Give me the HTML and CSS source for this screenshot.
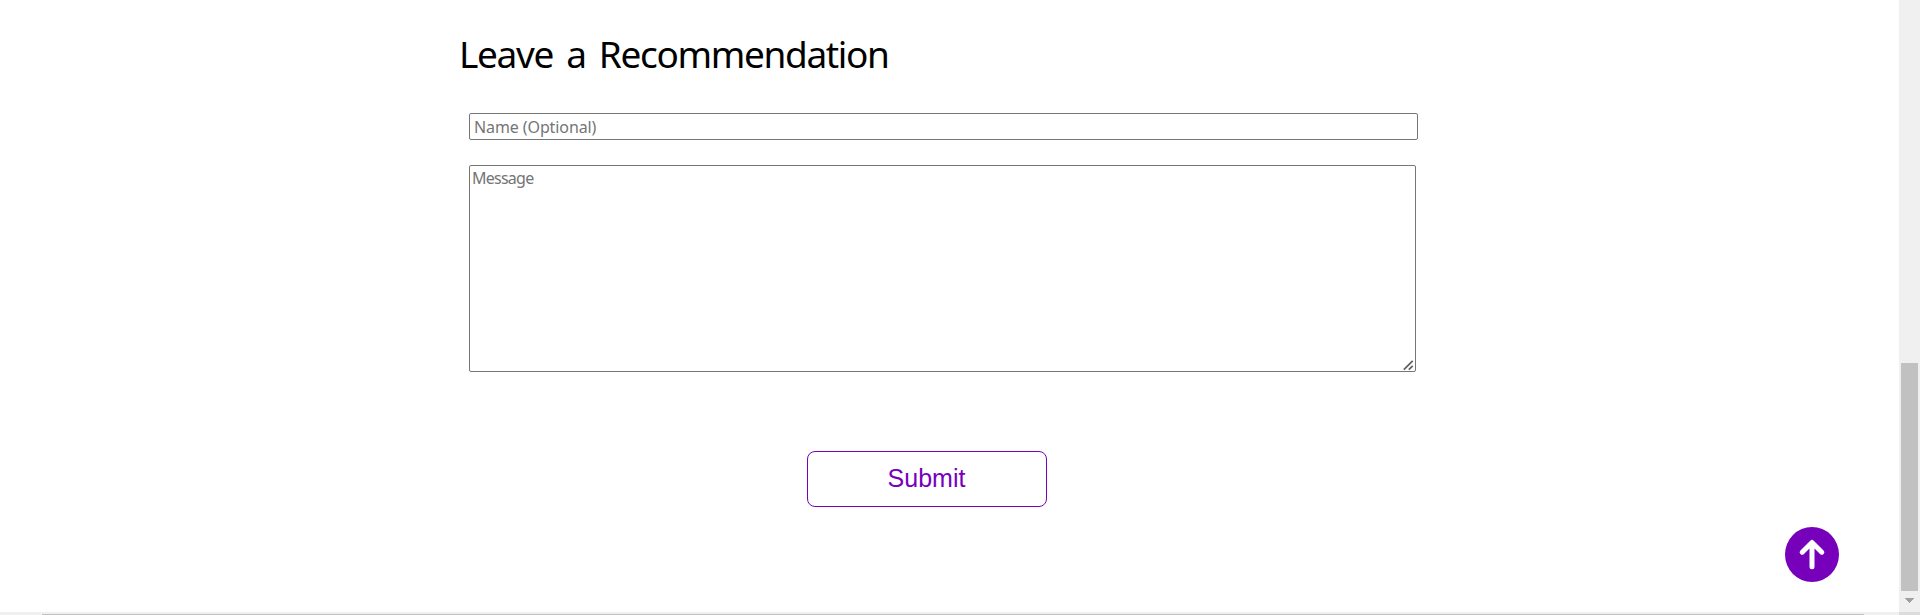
FILE: index.html
```html
<!DOCTYPE html>
<html lang="en">
<head>
<meta charset="utf-8">
<title>Leave a Recommendation</title>
<link rel="stylesheet" href="styles.css">
</head>
<body>
<div class="window">
  <main class="page">
    <form class="form">
      <h1 class="title">Leave a Recommendation</h1>
      <input class="field name" type="text" placeholder="Name (Optional)">
      <div class="message-wrap">
        <textarea class="field message" placeholder="Message"></textarea>
        <svg class="grip" width="11" height="11" viewBox="0 0 11 11"><path d="M.8 9.7 9.7 .8M5.8 9.7 9.7 5.8" stroke="#606060" stroke-width="1.7" fill="none"/></svg>
      </div>
      <button class="submit" type="button">Submit</button>
    </form>
    <a class="to-top" href="#" aria-label="Back to top">
      <svg width="54" height="55" viewBox="0 0 54 55"><ellipse cx="27" cy="27.5" rx="27" ry="27.5" fill="#7700bb"/><path d="M27 39.8V16M17.2 25.2 27 15.4 36.8 25.2" fill="none" stroke="#fff" stroke-width="5" stroke-linecap="round" stroke-linejoin="round"/></svg>
    </a>
  </main>
  <div class="vbar">
    <div class="vthumb"></div>
    <svg class="arrow" width="9" height="5" viewBox="0 0 9 5" shape-rendering="crispEdges"><path d="M0 0h9v1H8v1H7v1H6v1H5v1H4V4H3V3H2V2H1V1H0z" fill="#a0a0a0"/></svg>
  </div>
  <div class="hbar"><div class="hthumb"></div></div>
  <div class="corner"></div>
</div>
</body>
</html>
```
FILE: styles.css
```css
body {
  margin: 0;
  background: #fff;
  overflow: hidden;
}
.window {
  display: grid;
  grid-template-columns: 1fr 21px;
  grid-template-rows: 1fr 3px;
  height: 615px;
}
.page {
  position: relative;
  overflow: hidden;
}
.form {
  display: flex;
  flex-direction: column;
  align-items: flex-start;
  padding: 26px 0 0 469px;
}
.title {
  margin: 0 0 32px -10px;
  height: 55px;
  font: 400 37px/55px "Trebuchet MS", "Noto Sans", sans-serif;
  letter-spacing: -1.35px;
  word-spacing: 5px;
  white-space: nowrap;
  color: #000;
}
.field {
  display: block;
  box-sizing: border-box;
  margin: 0;
  border: 1px solid #767676;
  border-radius: 2px;
  outline: none;
  background: #fff;
  font: 16px/22px "Trebuchet MS", "Noto Sans", sans-serif;
}
.field::placeholder {
  color: #757575;
  opacity: 1;
}
.name {
  width: 949px;
  height: 27px;
  padding: 1px 3px 1px 4px;
  letter-spacing: -0.1px;
}
.message-wrap {
  position: relative;
  margin-top: 25px;
}
.message {
  width: 947px;
  height: 207px;
  padding: 1px 2px;
  letter-spacing: -0.75px;
  resize: none;
}
.grip {
  position: absolute;
  right: 2px;
  bottom: 1px;
}
.submit {
  box-sizing: border-box;
  width: 240px;
  height: 56px;
  margin: 79px 0 0 338px;
  padding: 0 1px 2px 0;
  border: 1px solid #7700bb;
  border-radius: 8px;
  background: #fff;
  color: #7700bb;
  font: 25px/52px "Liberation Sans", Arial, sans-serif;
}
.to-top {
  position: absolute;
  left: 1785px;
  top: 527px;
  height: 55px;
}
.to-top svg {
  display: block;
}
.vbar {
  display: flex;
  flex-direction: column;
  align-items: center;
  padding-top: 363px;
  background: #f0f0f0;
}
.vthumb {
  width: 17px;
  height: 228px;
  background: #c1c1c1;
}
.arrow {
  margin-top: 7px;
}
.hbar {
  padding: 2px 35px 0 42px;
  background: #f0f0f0;
}
.hthumb {
  height: 1px;
  background: #c1c1c1;
}
.corner {
  background: #dcdcdc;
}
```
